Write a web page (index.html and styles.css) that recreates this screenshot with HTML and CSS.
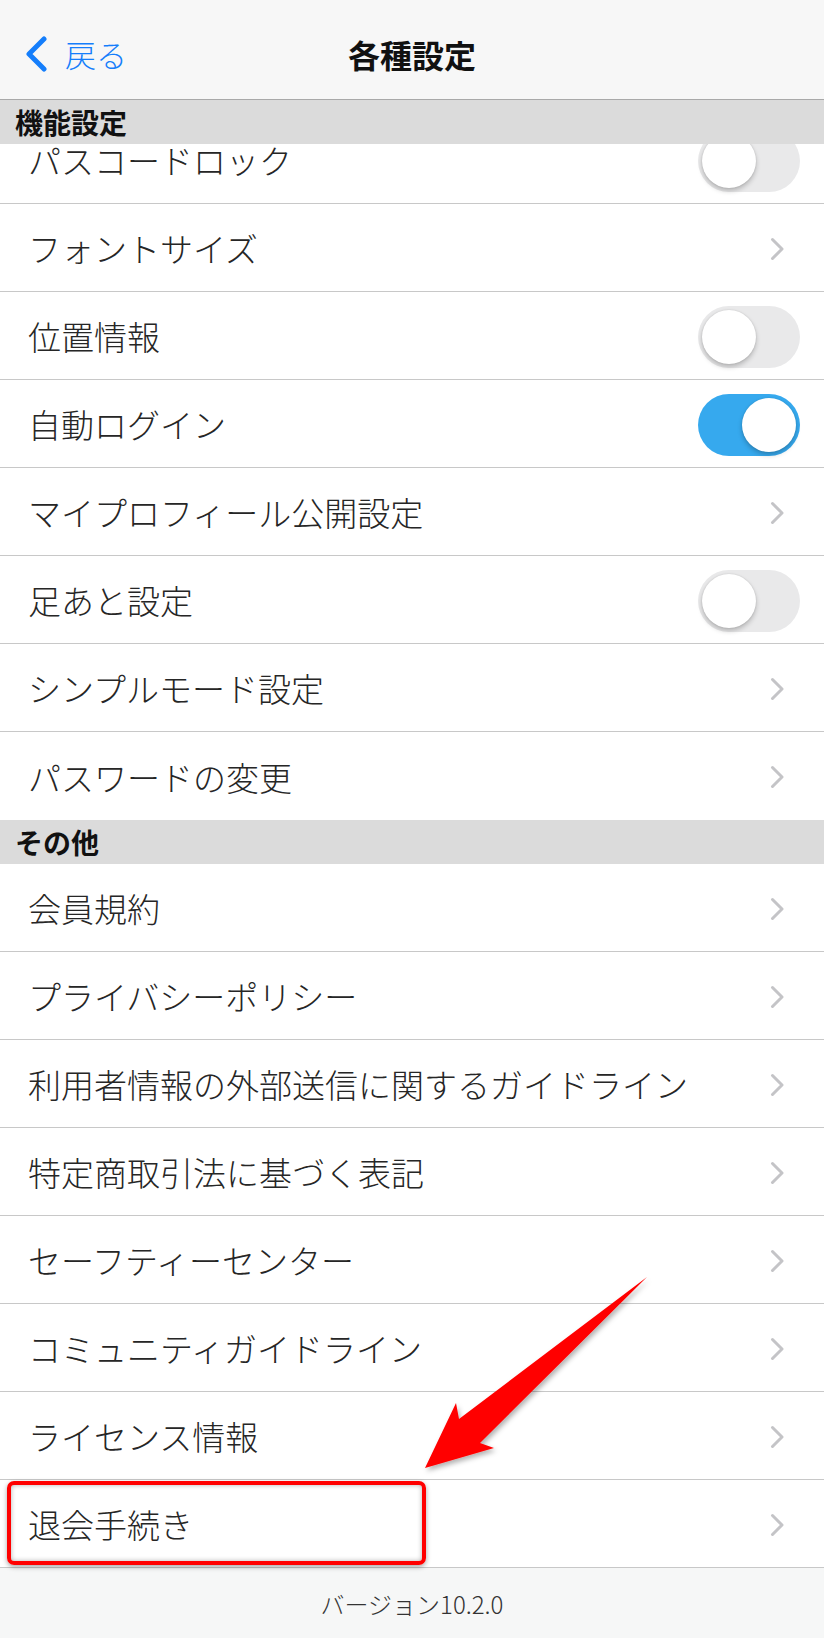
FILE: index.html
```html
<!DOCTYPE html>
<html lang="ja">

<head>
    <meta charset="UTF-8">
    <meta name="viewport" content="width=device-width, initial-scale=1.0">
    <title>各種設定</title>
    <link rel="stylesheet" href="styles.css">
</head>

<body>
    <div class="screen">
        <header class="navbar">
            <a class="back" href="#">
                <svg class="back-icon" width="22" height="36" viewBox="0 0 22 36">
                    <path d="M19 3 L4 18 L19 33" />
                </svg>
                <span>戻る</span>
            </a>
            <h1 class="title">各種設定</h1>
            <span></span>
        </header>

        <section class="group">
            <h2 class="group-title">機能設定</h2>
            <ul class="list list-scrolled">
                <li class="row"><span>パスコードロック</span><span class="switch"></span></li>
                <li class="row"><span>フォントサイズ</span><span class="chev"></span></li>
                <li class="row"><span>位置情報</span><span class="switch"></span></li>
                <li class="row"><span>自動ログイン</span><span class="switch on"></span></li>
                <li class="row"><span>マイプロフィール公開設定</span><span class="chev"></span></li>
                <li class="row"><span>足あと設定</span><span class="switch"></span></li>
                <li class="row"><span>シンプルモード設定</span><span class="chev"></span></li>
                <li class="row"><span>パスワードの変更</span><span class="chev"></span></li>
            </ul>
        </section>

        <section class="group">
            <h2 class="group-title">その他</h2>
            <ul class="list">
                <li class="row"><span>会員規約</span><span class="chev"></span></li>
                <li class="row"><span>プライバシーポリシー</span><span class="chev"></span></li>
                <li class="row"><span>利用者情報の外部送信に関するガイドライン</span><span class="chev"></span></li>
                <li class="row"><span>特定商取引法に基づく表記</span><span class="chev"></span></li>
                <li class="row"><span>セーフティーセンター</span><span class="chev"></span></li>
                <li class="row"><span>コミュニティガイドライン</span><span class="chev"></span></li>
                <li class="row"><span>ライセンス情報</span><span class="chev"></span></li>
                <li class="row"><span>退会手続き</span><span class="chev"></span></li>
            </ul>
        </section>

        <footer class="version">バージョン10.2.0</footer>

        <!-- annotation drawn over the screenshot -->
        <div class="mark-box"></div>
        <svg class="mark-arrow" width="824" height="1650" viewBox="0 0 824 1650">
            <defs>
                <filter id="arrowShadow" x="-20%" y="-20%" width="140%" height="140%">
                    <feDropShadow dx="2" dy="3" stdDeviation="2.5" flood-color="#000" flood-opacity="0.3" />
                </filter>
            </defs>
            <polygon points="647,1277 480,1443 494,1448 425,1468 456,1403 459,1419"
                fill="#ff0000" filter="url(#arrowShadow)" />
        </svg>
    </div>
</body>

</html>
```

FILE: styles.css
```css
body {
    margin: 0;
    padding: 0;
    font-family: "Noto Sans CJK JP", "Noto Sans", sans-serif;
    color: #262626;
    background-color: #ffffff;
}

.screen {
    position: relative;
    width: 824px;
    height: 1650px;
    overflow: hidden;
}

/* nav bar */

.navbar {
    display: grid;
    grid-template-columns: 1fr auto 1fr;
    align-items: center;
    box-sizing: border-box;
    height: 100px;
    padding: 8px 0 0;
    background-color: #f7f7f7;
    border-bottom: 1px solid #a9a9a9;
}

.back {
    display: flex;
    align-items: center;
    gap: 18px;
    padding-left: 25px;
    color: #157efb;
    font-size: 31px;
    font-weight: 300;
    text-decoration: none;
    line-height: 1;
}

.back-icon path {
    fill: none;
    stroke: #157efb;
    stroke-width: 5;
    stroke-linecap: round;
    stroke-linejoin: round;
}

.title {
    margin: 0;
    font-size: 32px;
    font-weight: 700;
    color: #111;
    line-height: 1;
}

/* groups */

.group-title {
    position: relative;
    z-index: 1;
    box-sizing: border-box;
    margin: 0;
    height: 44px;
    padding: 7px 0 0 15px;
    background-color: #dbdbdb;
    font-size: 28px;
    font-weight: 700;
    color: #111;
    line-height: 30px;
}

.list {
    list-style: none;
    margin: 0;
    padding: 0;
}

.list-scrolled {
    margin-top: -28px;
}

.list-scrolled .row:last-child {
    border-bottom: none;
}

.row {
    display: flex;
    align-items: center;
    justify-content: space-between;
    box-sizing: border-box;
    height: 88px;
    padding: 2px 24px 0 28px;
    border-bottom: 1px solid #c8c8c8;
    font-size: 33px;
    font-weight: 300;
    line-height: 1;
}

.chev {
    width: 14px;
    height: 24px;
    margin-right: 16px;
    background: url("data:image/svg+xml;utf8,<svg xmlns='http://www.w3.org/2000/svg' width='14' height='24' viewBox='0 0 14 24'><path d='M2.5 2.5 L12 12 L2.5 21.5' fill='none' stroke='%23c4c4c7' stroke-width='3' stroke-linecap='round' stroke-linejoin='round'/></svg>") no-repeat center;
}

.switch {
    position: relative;
    width: 102px;
    height: 62px;
    border-radius: 31px;
    background-color: #e9e9ea;
}

.switch::after {
    content: "";
    position: absolute;
    top: 4px;
    left: 4px;
    width: 54px;
    height: 54px;
    border-radius: 50%;
    background-color: #fff;
    box-shadow: 0 3px 5px rgba(0, 0, 0, 0.22), 0 0 2px rgba(0, 0, 0, 0.12);
}

.switch.on {
    background-color: #36a9ee;
}

.switch.on::after {
    left: 44px;
}

/* footer */

.version {
    height: 70px;
    background-color: #f6f7f7;
    text-align: center;
    font-size: 24px;
    font-weight: 300;
    line-height: 72px;
    color: #333;
}

/* annotation */

.mark-box {
    position: absolute;
    left: 7px;
    top: 1481px;
    width: 419px;
    height: 84px;
    box-sizing: border-box;
    border: 4px solid #ff0000;
    border-radius: 7px;
    box-shadow: 0 2px 5px rgba(0, 0, 0, 0.35), inset 0 0 5px rgba(0, 0, 0, 0.3);
}

.mark-arrow {
    position: absolute;
    left: 0;
    top: 0;
    pointer-events: none;
}
```
